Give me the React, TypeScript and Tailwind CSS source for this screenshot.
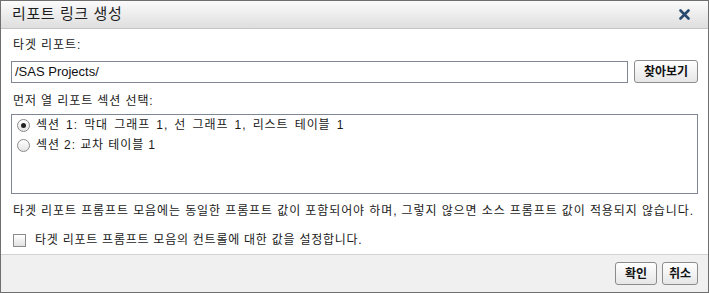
import { useState } from 'react';

const font = { fontFamily: '"Liberation Sans", "Noto Sans CJK KR", sans-serif' };

function Radio({ checked, onClick }: { checked: boolean; onClick: () => void }) {
  return (
    <span
      onClick={onClick}
      className="flex h-[13px] w-[13px] shrink-0 items-center justify-center rounded-full border border-[#8a8a8a] bg-gradient-to-b from-[#ffffff] to-[#e4e4e4]"
    >
      {checked && <span className="h-[5px] w-[5px] rounded-full bg-[#222]" />}
    </span>
  );
}

function DialogButton({ children, className = '' }: { children: React.ReactNode; className?: string }) {
  return (
    <button
      className={`flex h-[23px] items-center justify-center rounded-[3px] border border-[#8c8c8c] bg-gradient-to-b from-[#ffffff] to-[#e6e6e6] text-[12px] font-bold text-[#111] ${className}`}
    >
      {children}
    </button>
  );
}

export default function App() {
  const [section, setSection] = useState(1);
  const [setValues, setSetValues] = useState(false);

  return (
    <div style={font} className="flex h-[293px] w-[709px] flex-col border border-[#6f6f6f] bg-white text-[12px] text-[#1a1a1a]">
      <div className="flex h-[28px] shrink-0 items-center justify-between border-b border-[#c4c4c4] bg-gradient-to-b from-[#fbfbfb] to-[#dedede] pl-[11px] pr-[18px]">
        <span className="text-[15px] tracking-[0.6px] text-[#1e1e1e]">리포트 링크 생성</span>
        <svg width="11" height="11" viewBox="0 0 11 11">
          <path d="M1.5 1.5 L9.5 9.5 M9.5 1.5 L1.5 9.5" stroke="#284a70" strokeWidth="2.6" strokeLinecap="round" />
        </svg>
      </div>

      <div className="flex flex-1 flex-col px-[10px] tracking-[0.9px]">
        <div className="mt-[8px] h-[16px] pl-[2px] leading-[16px]">타겟 리포트:</div>
        <div className="mt-[7px] flex items-center gap-[6px]">
          <input
            defaultValue="/SAS Projects/"
            className="h-[22px] flex-1 border border-[#7f8794] px-[3px] text-[13px] tracking-normal text-[#111] outline-none"
          />
          <DialogButton className="w-[64px] tracking-normal">찾아보기</DialogButton>
        </div>
        <div className="mt-[10px] h-[16px] pl-[2px] leading-[16px]">먼저 열 리포트 섹션 선택:</div>
        <div className="mt-[5px] flex h-[80px] flex-col gap-[4px] border border-[#7f8794] px-[5px] pt-[2px]">
          <label className="flex h-[16px] items-center gap-[6px]">
            <Radio checked={section === 1} onClick={() => setSection(1)} />
            <span className="[word-spacing:2px]">섹션 1: 막대 그래프 1, 선 그래프 1, 리스트 테이블 1</span>
          </label>
          <label className="flex h-[16px] items-center gap-[6px]">
            <Radio checked={section === 2} onClick={() => setSection(2)} />
            <span>섹션 2: 교차 테이블 1</span>
          </label>
        </div>
        <div className="mt-[9px] h-[16px] pl-[2px] leading-[16px] whitespace-nowrap">
          타겟 리포트 프롬프트 모음에는 동일한 프롬프트 값이 포함되어야 하며, 그렇지 않으면 소스 프롬프트 값이 적용되지 않습니다.
        </div>
        <label className="mt-[12px] flex items-center gap-[9px] pl-[2px]">
          <span
            onClick={() => setSetValues(!setValues)}
            className="flex h-[13px] w-[13px] items-center justify-center border border-[#8a8a8a] bg-gradient-to-b from-[#ffffff] to-[#e2e2e2] text-[10px] leading-none"
          >
            {setValues ? '✓' : ''}
          </span>
          <span className="tracking-[0.75px]">타겟 리포트 프롬프트 모음의 컨트롤에 대한 값을 설정합니다.</span>
        </label>
      </div>

      <div className="flex h-[38px] shrink-0 items-center justify-end gap-[5px] border-t border-[#d2d2d2] bg-[#f0f0f0] pr-[10px]">
        <DialogButton className="w-[42px]">확인</DialogButton>
        <DialogButton className="w-[36px]">취소</DialogButton>
      </div>
    </div>
  );
}
